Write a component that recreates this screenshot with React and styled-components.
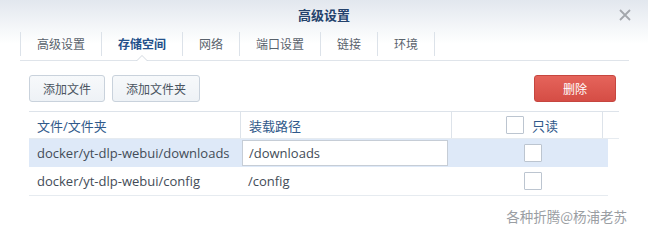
import React from "react";
import styled, { createGlobalStyle } from "styled-components";

const Global = createGlobalStyle`
  html, body { margin: 0; padding: 0; background: #fff; }
  * { box-sizing: border-box; }
`;

const FONT = `"Open Sans", "Noto Sans CJK SC", sans-serif`;

const Window = styled.div`
  width: 648px;
  height: 242px;
  font-family: ${FONT};
  background: linear-gradient(to bottom, #e2e7ee 0px, #f6f8fa 30px, #ffffff 44px);
  overflow: hidden;
`;

const TitleBar = styled.div`
  height: 30px;
  display: grid;
  grid-template-columns: 1fr auto 1fr;
  align-items: center;
`;

const Title = styled.div`
  grid-column: 2;
  font-size: 13px;
  font-weight: 700;
  color: #24426c;
  line-height: 30px;
`;

const CloseBtn = styled.div`
  grid-column: 3;
  justify-self: end;
  margin-right: 17px;
  width: 12px;
  height: 12px;
  display: flex;
`;

const TabBar = styled.div`
  display: flex;
  margin: 0 19px 0 20px;
  padding: 2px 0 4px;
  border-bottom: 1px solid #dfe4ea;
`;

const Tab = styled.div`
  position: relative;
  height: 24px;
  padding: 0 16px;
  display: flex;
  align-items: center;
  font-size: 12px;
  border-left: 1px solid #dce2e9;
  color: ${(p) => (p.$active ? "#23508a" : "#59626c")};
  font-weight: ${(p) => (p.$active ? 700 : 400)};
  &:last-child { border-right: 1px solid #dce2e9; }
  ${(p) =>
    p.$active &&
    `
    &::before, &::after {
      content: "";
      position: absolute;
      left: 50%;
      width: 0; height: 0;
      border-style: solid;
      border-color: transparent;
    }
    &::before {
      bottom: -5px;
      margin-left: -6px;
      border-width: 0 6px 6px 6px;
      border-bottom-color: #d3d9e0;
    }
    &::after {
      bottom: -5px;
      margin-left: -5px;
      border-width: 0 5px 5px 5px;
      border-bottom-color: #ffffff;
    }
  `}
`;

const Toolbar = styled.div`
  display: flex;
  gap: 7px;
  margin-top: 14px;
  padding: 0 32px 0 29px;
`;

const Button = styled.button`
  height: 27px;
  padding: 0 ${(p) => p.$px || 13}px;
  font-family: ${FONT};
  font-size: 12px;
  border-radius: 3px;
  cursor: pointer;
  color: ${(p) => (p.$danger ? "#ffffff" : "#4a545f")};
  border: 1px solid ${(p) => (p.$danger ? "#c6463f" : "#c9d2dc")};
  background: ${(p) =>
    p.$danger
      ? "linear-gradient(to bottom, #e5645b, #d54d45)"
      : "linear-gradient(to bottom, #f7f9fb, #eef2f6)"};
  ${(p) => p.$push && "margin-left: auto;"}
`;

const Table = styled.div`
  margin: 9px 0 0 29px;
  width: 590px;
  font-size: 13px;
`;

const HeadRow = styled.div`
  display: grid;
  grid-template-columns: 211px 211px 151px 17px;
  height: 28px;
  border-top: 1px solid #dde3ea;
  border-bottom: 1px solid #e6ebf0;
`;

const HeadCell = styled.div`
  display: flex;
  align-items: center;
  justify-content: ${(p) => (p.$center ? "center" : "flex-start")};
  gap: 8px;
  padding: 0 8px;
  ${(p) => p.$center && "padding-left: 18px;"}
  color: #30598a;
  border-left: ${(p) => (p.$sep ? "1px solid #dde3ea" : "none")};
`;

const Row = styled.div`
  display: grid;
  grid-template-columns: 211px 211px 157px;
  width: 579px;
  height: 28px;
  background: ${(p) => (p.$selected ? "#dee9f8" : "transparent")};
  ${(p) => p.$last && "border-bottom: 1px solid #e6ebf0; height: 29px;"}
`;

const Cell = styled.div`
  display: flex;
  align-items: center;
  padding: 0 8px;
  color: #434c57;
  white-space: nowrap;
  justify-content: ${(p) => (p.$center ? "center" : "flex-start")};
  ${(p) => p.$center && "padding-left: 14px;"}
`;

const PathInput = styled.div`
  margin: 1px 3px 1px 2px;
  width: 206px;
  height: 26px;
  border: 1px solid #c6cdd6;
  background: #fff;
  display: flex;
  align-items: center;
  padding: 0 6px;
  color: #434c57;
`;

const Check = styled.span`
  display: inline-block;
  width: 18px;
  height: 18px;
  border: 1px solid #bcc5d0;
  border-radius: 1px;
  background: #fff;
`;

const Footer = styled.div`
  display: flex;
  justify-content: flex-end;
  padding: 10px 21px 0 0;
  font-size: 13.5px;
  color: #9a9ea3;
  font-family: "Noto Sans CJK SC", sans-serif;
`;

export default function App() {
  const tabs = ["高级设置", "存储空间", "网络", "端口设置", "链接", "环境"];
  return (
    <>
      <Global />
      <Window>
        <TitleBar>
          <Title>高级设置</Title>
          <CloseBtn>
            <svg width="12" height="12" viewBox="0 0 12 12">
              <path d="M1 1L11 11M11 1L1 11" stroke="#a3a7ac" strokeWidth="1.8" />
            </svg>
          </CloseBtn>
        </TitleBar>
        <TabBar>
          {tabs.map((t, i) => (
            <Tab key={t} $active={i === 1}>
              {t}
            </Tab>
          ))}
        </TabBar>
        <Toolbar>
          <Button>添加文件</Button>
          <Button>添加文件夹</Button>
          <Button $danger $push $px={28}>删除</Button>
        </Toolbar>
        <Table>
          <HeadRow>
            <HeadCell>文件/文件夹</HeadCell>
            <HeadCell $sep>装载路径</HeadCell>
            <HeadCell $sep $center>
              <Check />
              只读
            </HeadCell>
            <HeadCell $sep />
          </HeadRow>
          <Row $selected>
            <Cell>docker/yt-dlp-webui/downloads</Cell>
            <PathInput>/downloads</PathInput>
            <Cell $center>
              <Check />
            </Cell>
          </Row>
          <Row $last>
            <Cell>docker/yt-dlp-webui/config</Cell>
            <Cell>/config</Cell>
            <Cell $center>
              <Check />
            </Cell>
          </Row>
        </Table>
        <Footer>各种折腾@杨浦老苏</Footer>
      </Window>
    </>
  );
}
